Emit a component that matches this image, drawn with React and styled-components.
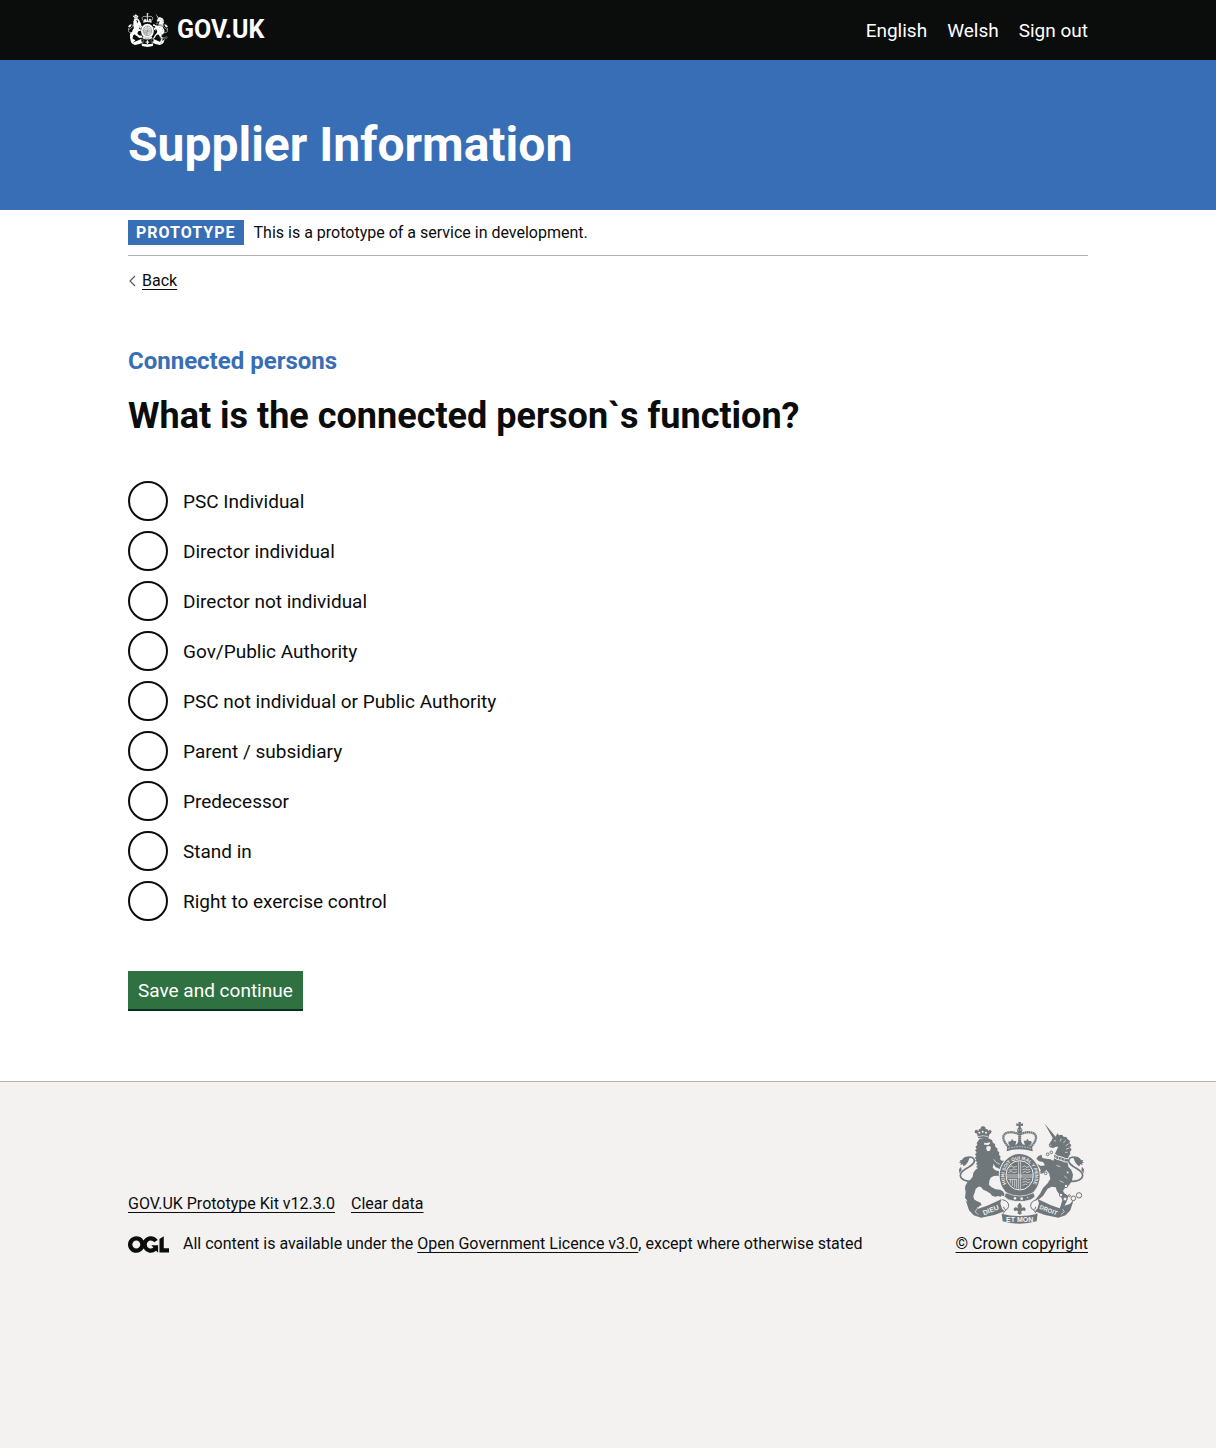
import React, { useState } from "react";
import styled, { createGlobalStyle } from "styled-components";

const colours = {
  ink: "#0b0c0c",
  brand: "#386eb5",
  green: "#2f7141",
  greenShadow: "#0a2f1c",
  grey: "#f3f2f1",
  line: "#b1b4b6",
  crest: "#6f777b",
};

const GlobalStyle = createGlobalStyle`
  *, *::before, *::after { box-sizing: border-box; }
  html { background: ${colours.grey}; }
  body {
    margin: 0;
    background: #fff;
    color: ${colours.ink};
    font-family: Roboto, "Liberation Sans", sans-serif;
    font-size: 16px;
    line-height: 20px;
  }
`;

const Container = styled.div`
  max-width: 960px;
  margin: 0 auto;
  @media (max-width: 1020px) {
    margin: 0 30px;
  }
`;

const Header = styled.header`
  background: ${colours.ink};
  color: #fff;
`;

const HeaderRow = styled(Container)`
  display: flex;
  align-items: center;
  justify-content: space-between;
  min-height: 60px;
`;

const HomeLink = styled.a`
  display: flex;
  align-items: center;
  gap: 9px;
  color: inherit;
  font-size: 25px;
  font-weight: 700;
  line-height: 30px;
  text-decoration: none;
`;

const HeaderNav = styled.nav`
  display: flex;
  flex-wrap: wrap;
  gap: 20px;
`;

const HeaderLink = styled.a`
  color: inherit;
  font-size: 19px;
  line-height: 25px;
  text-decoration: none;
`;

const Masthead = styled.div`
  padding: 60px 0 40px;
  background: ${colours.brand};
  color: #fff;
`;

const ServiceName = styled.div`
  font-size: 48px;
  font-weight: 700;
  line-height: 50px;
`;

const PhaseBanner = styled.div`
  display: flex;
  align-items: center;
  gap: 10px;
  padding: 10px 0;
  border-bottom: 1px solid ${colours.line};
`;

const Tag = styled.strong`
  padding: 0 8px;
  background: ${colours.brand};
  color: #fff;
  line-height: 25px;
  letter-spacing: 1px;
  text-transform: uppercase;
`;

const TextLink = styled.a`
  color: inherit;
  text-decoration: underline;
  text-decoration-thickness: 1px;
  text-underline-offset: 3px;
`;

const BackLink = styled.a`
  display: flex;
  align-items: center;
  gap: 5px;
  width: fit-content;
  margin-top: 15px;
  color: inherit;
  text-decoration: underline;
  text-decoration-thickness: 1px;
  text-underline-offset: 3px;
`;

const Main = styled.main`
  padding: 55px 0 70px;
`;

const Fieldset = styled.fieldset`
  min-width: 0;
  margin: 0 0 50px;
  padding: 0;
  border: 0;
`;

const Legend = styled.legend`
  padding: 0;
  margin-bottom: 45px;
`;

const Caption = styled.span`
  display: block;
  margin-bottom: 20px;
  color: ${colours.brand};
  font-size: 24px;
  font-weight: 700;
  line-height: 30px;
`;

const Heading = styled.h1`
  margin: 0;
  font-size: 36px;
  font-weight: 700;
  line-height: 40px;
`;

const RadioList = styled.div`
  display: grid;
  justify-items: start;
  gap: 10px;
`;

const RadioItem = styled.div`
  display: flex;
  align-items: center;
`;

const RadioInput = styled.input`
  appearance: none;
  flex: none;
  width: 40px;
  height: 40px;
  margin: 0;
  border: 2px solid ${colours.ink};
  border-radius: 50%;
  background: #fff;
  cursor: pointer;
  &:checked {
    background: radial-gradient(${colours.ink} 10px, #fff 11px);
  }
  &:focus {
    outline: 0;
    box-shadow: 0 0 0 3px #fd0;
  }
`;

const RadioLabel = styled.label`
  padding: 0 15px;
  font-size: 19px;
  line-height: 25px;
  cursor: pointer;
`;

const SubmitButton = styled.button`
  display: block;
  padding: 10px 10px 9px;
  border: 0;
  border-bottom: 2px solid ${colours.greenShadow};
  background: ${colours.green};
  color: #fff;
  font: inherit;
  font-size: 19px;
  line-height: 19px;
  cursor: pointer;
`;

const Footer = styled.footer`
  padding: 40px 0 25px;
  border-top: 1px solid ${colours.line};
  background: ${colours.grey};
`;

const FooterRow = styled(Container)`
  display: flex;
  flex-wrap: wrap;
  align-items: flex-end;
  justify-content: space-between;
  gap: 30px;
`;

const FooterMeta = styled.div`
  display: grid;
  gap: 20px;
`;

const FooterLinks = styled.nav`
  display: flex;
  flex-wrap: wrap;
  gap: 16px;
`;

const Licence = styled.div`
  display: flex;
  align-items: center;
  gap: 14px;
`;

const CopyrightLink = styled(TextLink)`
  display: grid;
  justify-items: center;
  gap: 10px;
`;

const Drawing = styled.svg`
  display: block;
  flex: none;
`;

const Motto = styled.text`
  font-family: "Liberation Sans", sans-serif;
  font-weight: 700;
  text-anchor: middle;
`;

const Chevron = () => (
  <Drawing width="9" height="12" viewBox="0 0 9 12" aria-hidden="true">
    <path d="M7 1L2 6l5 5" fill="none" stroke="#505a5f" strokeWidth="1.2" />
  </Drawing>
);

const OglLogo = () => (
  <Drawing width="41" height="17" viewBox="0 0 483.2 195.7" role="img" aria-label="Open Government Licence">
    <path
      fill={colours.ink}
      d="M421.5 142.8V.1l-50.7 32.3v161.1h112.4v-50.7zm-122.3-9.6A47.12 47.12 0 0 1 221 97.8c0-26 21.1-47.1 47.1-47.1 16.7 0 31.4 8.7 39.7 21.8l42.7-27.2A97.63 97.63 0 0 0 268.1 0c-36.5 0-68.3 20.1-85.1 49.7A98 98 0 0 0 97.8 0C43.9 0 0 43.9 0 97.8s43.9 97.8 97.8 97.8c36.5 0 68.3-20.1 85.1-49.7a97.76 97.76 0 0 0 149.6 25.4l19.4 22.2h3v-87.8h-80l24.3 27.5zM97.8 145c-26 0-47.1-21.1-47.1-47.1s21.1-47.1 47.1-47.1 47.1 21.1 47.1 47.1S123.8 145 97.8 145"
    />
  </Drawing>
);

const Tail = ({ fill, transform }) => (
  <g transform={transform}>
    <path
      d="M101 214c-17 1-36-4-37-18 0-13 17-19 27-26 10-6 16-12 15-20-2-8-11-10-18-7"
      fill="none"
      stroke={fill}
      strokeWidth="5"
    />
    <path d="M91 140c-10-2-19 3-22 10l-7 1 3 3-5 4 6 1-2 6 7-2 3 6c7-5 16-13 17-29zM61 190l-1-12 6-8 2 11z" fill={fill} />
  </g>
);

const RibbonEnd = ({ fill, ground, transform }) => (
  <g transform={transform}>
    <path
      d="M80 270l12 12 20 7 6 7 30-10 40-19-4 13 5 16 8 8-31 11-40 8-22-7-14-15z"
      fill={fill}
    />
    <path d="M117 293l-9 12 10 9M187 270q22 3 20 20-2 10-10 10-7-2-6-9" fill="none" stroke={ground} strokeWidth="2" />
    <path d="M190 269q20 4 19 20-2 10-9 10-7-2-6-9M201 299l-9 12" fill="none" stroke={fill} strokeWidth="3" />
  </g>
);

function RoyalArms({ width, height, fill, ground, lettering }) {
  return (
    <Drawing width={width} height={height} viewBox="60 36 375 306" preserveAspectRatio="none" aria-hidden="true">
      {/* ribbon */}
      <RibbonEnd fill={fill} ground={ground} />
      <RibbonEnd fill={fill} ground={ground} transform="translate(484) scale(-1 1)" />
      <path d="M188 311q54 14 108 0l-3 23q-51 14-102 0z" fill={fill} />
      <path
        d="M242 278c-8 7-8 13-3 20-4-8-14-9-15 0 0 6 6 6 8 3 2 3 5 3 7 2l-4 7 7 4 7-4-4-7c2 1 5 1 7-2 2 3 8 3 8-3-1-9-11-8-15 0 5-7 5-13-3-20z"
        fill={fill}
      />

      {/* lion */}
      <g fill={fill}>
        <path d="M118 85l-4-14-7-3 1-7 6-2 4 5 2-7 5-1 1-5 4-2 5 0 4 3 1 5 5 0 3 6 5-4 5 4-2 7-5 3-3 14-15-3z" />
        <path d="M122 86l14-2 15 2 8 4 3 8 6 4 1 8 7 6-1 6 6 5-1 7 5 6-2 7 5 5 8 0 3 6 5 3-1 9-9 8-8 2-8-5-9-4-5-10-3 12 8 8 12 3 9 6 2 8-8 4-8-5-12 1-9 5-4 9-1 12 8 8 12 6 14 1 9 6 4 9-3 5-6-3-3 5-7-3-9 2-10-3-4-6-12-7-10-5-8-9-7 0-8 7-3 11-4 10 2 10 8 5 12 5 3 8-6 1-3 5-8-1-8 2-9-6-8-7-2-9-6-7 2-18-2-10 1-9 6-10 9-8 7-9 2-12 6-8 8-6-6-3 5-5-5-4 4-6-7-3 4-5-5-4 5-6-4-5 5-6-5-6 5-5-4-5 6-6-2-6z" />
      </g>
      <Tail fill={fill} />
      <g fill={ground}>
        <path d="M136 98l8 1 7-2 3 3-7 6-6-2-6 0zM142 110l8-2 6 3-3 11-7 2-4-6z" />
        <circle cx="121" cy="68" r="3" />
        <circle cx="131" cy="65" r="3" />
        <circle cx="141" cy="68" r="3" />
      </g>
      <path d="M117 80q15-6 31 0M164 148l7 9 12 6" fill="none" stroke={ground} strokeWidth="2" />

      {/* unicorn */}
      <path
        fill={fill}
        d="M316 40L350 80 355 70 360 76 369 74 374 80 382 81 386 88 393 92 391 99 397 105 393 112 398 119 393 125 394 133 389 138 388 150 386 158 388 170 397 180 402 194 399 212 390 226 378 234 372 242 376 250 388 258 384 272 378 284 374 296 360 300 366 284 370 270 364 256 354 244 350 232 338 230 326 236 318 248 312 258 300 268 288 271 296 260 304 250 312 234 326 220 334 206 330 190 322 180 312 190 302 192 296 184 306 182 300 172 288 170 284 160 296 162 306 168 318 166 312 156 300 154 292 146 298 138 308 134 310 144 322 146 334 148 344 152 346 136 352 122 358 110 350 110 343 114 332 112 329 104 337 92 341 84z"
      />
      <Tail fill={fill} transform="translate(495) scale(-1 1)" />
      <g fill="none" stroke={ground} strokeWidth="2">
        <path d="M346 132l10 6 12 3 12 5 10 0M343 142l11 6 12 3 12 5 10 0" strokeWidth="3" />
        <path d="M351 137l-1 9M359 140l-1 9M367 142l-1 9M376 145l-1 9" />
        <path d="M344 92l7 1M367 86l-4 8M380 91l-7 8M389 101l-9 6M391 114l-10 3M386 127l-8 0M332 105l5 1" />
        <path d="M362 212l12 6M376 197l8 9M352 166l12 4" />
      </g>
      <g fill={ground} stroke={fill} strokeWidth="3">
        <circle cx="337" cy="127" r="4" />
        <circle cx="326" cy="133" r="4" />
        <circle cx="320" cy="190" r="4" />
        <circle cx="386" cy="187" r="4" />
        <circle cx="381" cy="228" r="5" />
        <circle cx="366" cy="255" r="5" />
        <circle cx="378" cy="267" r="6" />
        <circle cx="403" cy="265" r="7" />
        <circle cx="391" cy="257" r="3" />
        <circle cx="420" cy="256" r="8" />
      </g>

      {/* garter */}
      <ellipse cx="242" cy="198" rx="63" ry="69" fill={ground} />
      <ellipse cx="242" cy="198" rx="60" ry="66" fill={fill} />
      <ellipse cx="242" cy="196" rx="41" ry="44" fill={fill} stroke={ground} strokeWidth="3" />
      <path d="M200 248q42 20 84 0l4 12-12 9-20 5h-28l-20-5-12-9z" fill={fill} stroke={ground} strokeWidth="2" />
      <g fill={ground}>
        <circle cx="228" cy="265" r="4" />
        <circle cx="248" cy="266" r="4" />
        <circle cx="266" cy="262" r="2" />
      </g>
      {lettering && (
        <>
          <path id="garter-curve" d="M211 234A46 49 0 1 1 273 234" fill="none" />
          <Motto fontSize="14" fill={ground}>
            <textPath href="#garter-curve" startOffset="50%">
              HONI SOIT QUI MAL Y PENSE
            </textPath>
          </Motto>
        </>
      )}

      {/* quartered shield */}
      <g fill="none" stroke={ground} strokeWidth="2">
        <path d="M239 154v84M245 154v84M202 195h80M202 201h80" />
        <path d="M211 172l7-5 4 5 12-3M209 180h9l4-3 12 2M208 188l10-4 5 4 11-3M250 171l8-4 4 5 9-2M250 179l10-2 6 3 7-2M250 188l8-4 6 4 10-4" />
        <path d="M208 208h26M214 208v12M220 208v20M227 208v24M233 208v27" />
        <path d="M251 209l9-3 5 4 9-2M250 217l10-3 6 4 8-2M250 226l9-4 6 2" />
      </g>

      {/* crown */}
      <g fill="none" stroke={fill}>
        <path d="M209 112c-8-10-17-20-16-32 3-16 28-16 46-8M275 112c8-10 17-20 16-32-3-16-28-16-46-8" strokeWidth="7" strokeDasharray="5 1" />
        <path d="M242 66v44" strokeWidth="9" strokeDasharray="5 1" />
      </g>
      <g fill={fill}>
        <path d="M238 36h8l-1 6 7-2v8l-7-1 1 8h-8l1-8-7 1v-8l7 2z" />
        <circle cx="242" cy="61" r="8" />
        <path d="M205 108q37-10 74 0l2 16q-39-12-78 0z" />
        <path d="M219 86l5 7 8 0-2 8-3 6h-14l-5-6 1-7 7 0zM265 86l5 7 7 0 1 7-5 6h-14l-3-6-2-8 8 0zM242 88l6 10 4 8h-20l4-8z" />
      </g>
      <path d="M208 115q34-10 68 0M235 60h14" fill="none" stroke={ground} strokeWidth="2" strokeDasharray="5 3" />

      {lettering && (
        <g fill={ground}>
          <Motto fontSize="21" transform="translate(158 307) rotate(-22)">DIEU</Motto>
          <Motto fontSize="21" x="242" y="335">ET MON</Motto>
          <Motto fontSize="18" transform="translate(326 306) rotate(22)">DROIT</Motto>
        </g>
      )}
    </Drawing>
  );
}

const functions = [
  "PSC Individual",
  "Director individual",
  "Director not individual",
  "Gov/Public Authority",
  "PSC not individual or Public Authority",
  "Parent / subsidiary",
  "Predecessor",
  "Stand in",
  "Right to exercise control",
];

export default function App() {
  const [selected, setSelected] = useState(null);

  return (
    <>
      <GlobalStyle />
      <Header>
        <HeaderRow>
          <HomeLink href="#">
            <RoyalArms width="40" height="34" fill="#fff" ground={colours.ink} />
            GOV.UK
          </HomeLink>
          <HeaderNav aria-label="Account">
            <HeaderLink href="#">English</HeaderLink>
            <HeaderLink href="#">Welsh</HeaderLink>
            <HeaderLink href="#">Sign out</HeaderLink>
          </HeaderNav>
        </HeaderRow>
      </Header>
      <Masthead>
        <Container>
          <ServiceName>Supplier Information</ServiceName>
        </Container>
      </Masthead>
      <Container>
        <PhaseBanner>
          <Tag>Prototype</Tag>
          <span>This is a prototype of a service in development.</span>
        </PhaseBanner>
        <BackLink href="#">
          <Chevron />
          Back
        </BackLink>
        <Main>
          <form onSubmit={(event) => event.preventDefault()}>
            <Fieldset>
              <Legend>
                <Caption>Connected persons</Caption>
                <Heading>What is the connected person`s function?</Heading>
              </Legend>
              <RadioList>
                {functions.map((name, index) => (
                  <RadioItem key={name}>
                    <RadioInput
                      type="radio"
                      name="function"
                      id={`function-${index}`}
                      value={name}
                      checked={selected === name}
                      onChange={() => setSelected(name)}
                    />
                    <RadioLabel htmlFor={`function-${index}`}>{name}</RadioLabel>
                  </RadioItem>
                ))}
              </RadioList>
            </Fieldset>
            <SubmitButton type="submit">Save and continue</SubmitButton>
          </form>
        </Main>
      </Container>
      <Footer>
        <FooterRow>
          <FooterMeta>
            <FooterLinks aria-label="Support links">
              <TextLink href="#">GOV.UK Prototype Kit v12.3.0</TextLink>
              <TextLink href="#">Clear data</TextLink>
            </FooterLinks>
            <Licence>
              <OglLogo />
              <span>
                All content is available under the <TextLink href="#">Open Government Licence v3.0</TextLink>, except
                where otherwise stated
              </span>
            </Licence>
          </FooterMeta>
          <CopyrightLink href="#">
            <RoyalArms width="125" height="102" fill={colours.crest} ground={colours.grey} lettering />
            © Crown copyright
          </CopyrightLink>
        </FooterRow>
      </Footer>
    </>
  );
}
